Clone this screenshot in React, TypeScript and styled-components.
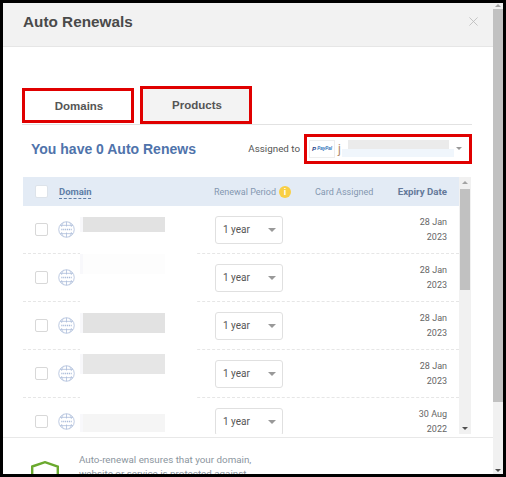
import React from 'react';
import styled, { createGlobalStyle } from 'styled-components';

const GlobalStyle = createGlobalStyle`
  html, body { margin: 0; padding: 0; background: #000; }
  * { box-sizing: border-box; }
`;

type RowData = {
  date: string;
  year: string;
  shade: string;
  top: number;
  height: number;
};

const ROWS: RowData[] = [
  { date: '28 Jan', year: '2023', shade: '#e2e2e2', top: 11, height: 15 },
  { date: '28 Jan', year: '2023', shade: '#fdfdfd', top: 0, height: 20 },
  { date: '28 Jan', year: '2023', shade: '#e2e2e2', top: 11, height: 20 },
  { date: '28 Jan', year: '2023', shade: '#e6e6e6', top: 4, height: 20 },
  { date: '30 Aug', year: '2022', shade: '#f5f5f5', top: 16, height: 18 },
];

const Globe = () => (
  <GlobeSvg viewBox="0 0 18 18" fill="none" stroke="#a9bad8" strokeWidth="0.8">
    <circle cx="9" cy="9" r="8.2" />
    <path d="M2.200 4.600h13.600M2.200 13.400h13.600M9 .8v5M9 12.200v5" />
    <path d="M6 1.500C4.600 3 4 4.400 3.800 6.200M12 1.500c1.400 1.500 2 2.900 2.200 4.700M6 16.500c-1.400-1.500-2-2.900-2.200-4.700M12 16.500c1.400-1.500 2-2.900 2.200-4.700" />
    <path d="M3.500 9h11" strokeDasharray="1.200 .8" strokeWidth="1.600" />
  </GlobeSvg>
);

export default function App() {
  return (
    <>
      <GlobalStyle />
      <Frame>
        <Modal>
          <Header>
            <Title>Auto Renewals</Title>
            <CloseIcon viewBox="0 0 10 10" stroke="#b9b9b9" strokeWidth="0.9">
              <path d="M.5.500l9 9M9.500.500l-9 9" />
            </CloseIcon>
          </Header>
          <Body>
            <Tabs>
              <Tab>Domains</Tab>
              <Tab $inactive>Products</Tab>
            </Tabs>
            <SummaryBar>
              <Heading>You have 0 Auto Renews</Heading>
              <AssignedLabel>Assigned to</AssignedLabel>
              <AccountSelect>
                <PayPalBadge>
                  <PayPalMark>P</PayPalMark>
                  <PayPalText>PayPal</PayPalText>
                </PayPalBadge>
                <AccountInitial>j</AccountInitial>
                <AccountBlur />
                <SmallCaret />
              </AccountSelect>
            </SummaryBar>
            <TableArea>
              <Table>
                <HeadRow>
                  <CheckBox $head />
                  <DomainHead>Domain</DomainHead>
                  <PeriodHead>
                    Renewal Period
                    <InfoDot>i</InfoDot>
                  </PeriodHead>
                  <CardHead>Card Assigned</CardHead>
                  <ExpiryHead>Expiry Date</ExpiryHead>
                </HeadRow>
                {ROWS.map((row, i) => (
                  <Row key={i}>
                    <CheckBox />
                    <Globe />
                    <DomainCell>
                      <Smudge $shade={row.shade} $top={row.top} $height={row.height} />
                      <LineGap />
                    </DomainCell>
                    <YearSelect>
                      1 year
                      <CaretMark />
                    </YearSelect>
                    <DateCell>
                      {row.date}
                      <br />
                      {row.year}
                    </DateCell>
                  </Row>
                ))}
              </Table>
              <InnerScroll>
                <ArrowUp />
                <InnerThumb />
                <ArrowDown />
              </InnerScroll>
            </TableArea>
          </Body>
          <Footer>
            <ShieldIcon viewBox="0 0 28 32" fill="none" stroke="#6aa92e" strokeWidth="2.4">
              <path d="M1.200 5.500L14 1.200l12.800 4.300v12.500c0 6-6 10-12.800 13C7.200 28 1.200 24 1.200 18z" />
            </ShieldIcon>
            <FooterText>
              Auto-renewal ensures that your domain,
              <br />
              website or service is protected against
            </FooterText>
          </Footer>
        </Modal>
        <OuterScroll>
          <ArrowUp />
          <OuterThumb />
          <ArrowDownDark />
        </OuterScroll>
      </Frame>
    </>
  );
}

const Frame = styled.div`
  width: 506px;
  height: 477px;
  border: 3px solid #000;
  background: #fff;
  display: flex;
  overflow: hidden;
`;

const Modal = styled.div`
  width: 490px;
  height: 471px;
  display: flex;
  flex-direction: column;
  overflow: hidden;
  font-family: Roboto, sans-serif;
`;

const Header = styled.div`
  height: 44px;
  flex: none;
  padding: 0 15px 0 20px;
  background: #f2f2f2;
  border-bottom: 1px solid #e6e6e6;
  display: flex;
  align-items: center;
  justify-content: space-between;
`;

const Title = styled.div`
  font: bold 15.300px 'Liberation Sans', Arial, sans-serif;
  color: #4a4a4a;
  margin-top: -6px;
`;

const CloseIcon = styled.svg`
  width: 9px;
  height: 9px;
  margin-top: -6px;
`;

const Body = styled.div`
  height: 390px;
  flex: none;
  padding: 39px 0 0 20px;
  overflow: hidden;
`;

const Tabs = styled.div`
  width: 450px;
  height: 39px;
  margin-left: -1px;
  display: flex;
  align-items: flex-end;
  gap: 6px;
  border-bottom: 1px solid #e2e2e2;
`;

const Tab = styled.div<{ $inactive?: boolean }>`
  width: 112px;
  height: ${(p) => (p.$inactive ? 38 : 35)}px;
  margin-bottom: ${(p) => (p.$inactive ? 0 : 1)}px;
  padding-left: 2px;
  border: 3px solid #e00000;
  background: ${(p) => (p.$inactive ? '#f3f3f3' : '#fff')};
  font: bold 11.500px 'Liberation Sans', Arial, sans-serif;
  color: #555;
  display: flex;
  align-items: center;
  justify-content: center;
`;

const SummaryBar = styled.div`
  width: 449px;
  height: 47px;
  display: flex;
  align-items: center;
`;

const Heading = styled.div`
  margin-left: 8px;
  font: bold 14px 'Liberation Sans', Arial, sans-serif;
  color: #4f73ab;
`;

const AssignedLabel = styled.div`
  margin-left: auto;
  margin-right: 4px;
  font-size: 9.800px;
  color: #555;
`;

const AccountSelect = styled.div`
  width: 168px;
  height: 30px;
  border: 3px solid #e00000;
  background: #fff;
  display: flex;
  align-items: center;
  padding: 0 7px 0 2px;
`;

const PayPalBadge = styled.div`
  width: 26px;
  height: 18px;
  border: 1px solid #eee;
  display: flex;
  align-items: center;
  justify-content: center;
  gap: 1px;
`;

const PayPalMark = styled.span`
  font: italic bold 6px 'Liberation Sans', sans-serif;
  color: #1f3f86;
`;

const PayPalText = styled.span`
  font: italic bold 4.500px 'Liberation Sans', sans-serif;
  color: #2a6fb8;
`;

const AccountInitial = styled.span`
  margin-left: 3px;
  font-size: 12px;
  color: #b0876e;
`;

const AccountBlur = styled.div`
  width: 112px;
  height: 17px;
  margin: 0 auto 0 1px;
  background:
    linear-gradient(#ebebeb, #ebebeb) 6px 0 / 101px 9px no-repeat,
    linear-gradient(#f0f6fc, #f0f6fc) 0 9px / 100% 8px no-repeat;
`;

const TableArea = styled.div`
  margin: 5px 0 0 0;
  width: 449px;
  height: 257px;
  display: flex;
`;

const Table = styled.div`
  width: 436px;
  overflow: hidden;
`;

const HeadRow = styled.div`
  height: 29px;
  background: #e3ebf5;
  display: flex;
  align-items: center;
  padding-left: 12px;
  font-size: 9px;
  color: #8497b0;
`;

const CheckBox = styled.div<{ $head?: boolean }>`
  width: 13px;
  height: 13px;
  flex: none;
  background: #fff;
  border: 1px solid ${(p) => (p.$head ? '#dde3ea' : '#d8d8d8')};
  border-radius: 2px;
`;

const DomainHead = styled.div`
  margin-left: 11px;
  width: 155px;
  font-size: 9.500px;
  font-weight: 700;
  color: #5f7fa8;
  text-decoration: underline dashed;
  text-underline-offset: 3px;
`;

const PeriodHead = styled.div`
  width: 101px;
  display: flex;
  align-items: center;
  gap: 3px;
  white-space: nowrap;
`;

const InfoDot = styled.span`
  width: 12px;
  height: 12px;
  border-radius: 50%;
  background: #f9cf45;
  color: #fff;
  font: bold 9px/12px 'Liberation Sans', sans-serif;
  text-align: center;
`;

const CardHead = styled.div`
  white-space: nowrap;
`;

const ExpiryHead = styled.div`
  margin-left: auto;
  margin-right: 12px;
  font-size: 9.700px;
  font-weight: 700;
  color: #64799a;
`;

const Row = styled.div`
  position: relative;
  height: 48px;
  display: flex;
  align-items: center;
  padding: 0 12px;
  border-bottom: 1px dashed #e6e6e6;
`;

const GlobeSvg = styled.svg`
  width: 17px;
  height: 17px;
  flex: none;
  margin-left: 10px;
`;

const DomainCell = styled.div`
  width: 140px;
  flex: none;
  align-self: stretch;
`;

const Smudge = styled.div<{ $shade: string; $top: number; $height: number }>`
  position: absolute;
  left: 57px;
  top: ${(p) => p.$top}px;
  height: ${(p) => p.$height}px;
  width: 85px;
  background: ${(p) => p.$shade};
  border-left: 3px solid #f8f8fb;
`;

const LineGap = styled.div`
  position: absolute;
  left: 57px;
  bottom: -1px;
  width: 117px;
  height: 1px;
  background: #fff;
`;

const YearSelect = styled.div`
  width: 68px;
  height: 28px;
  flex: none;
  border: 1px solid #e0e0e0;
  border-radius: 3px;
  background: #fff;
  display: flex;
  align-items: center;
  justify-content: space-between;
  padding: 0 6px 0 7px;
  font-size: 10px;
  color: #555;
`;

const CaretMark = styled.span`
  width: 0;
  height: 0;
  border-left: 4px solid transparent;
  border-right: 4px solid transparent;
  border-top: 4px solid #999;
`;

const SmallCaret = styled(CaretMark)`
  border-left-width: 3px;
  border-right-width: 3px;
  border-top-width: 3px;
`;

const DateCell = styled.div`
  margin-left: auto;
  text-align: right;
  font-size: 9px;
  line-height: 15px;
  color: #666;
`;

const InnerScroll = styled.div`
  width: 12px;
  background: #f1f1f1;
  display: flex;
  flex-direction: column;
  align-items: center;
  padding-top: 4px;
`;

const ArrowUp = styled.span`
  width: 0;
  height: 0;
  flex: none;
  border-left: 3px solid transparent;
  border-right: 3px solid transparent;
  border-bottom: 3px solid #a3a3a3;
`;

const InnerThumb = styled.div`
  width: 10px;
  height: 101px;
  margin-top: 5px;
  background: #c1c1c1;
`;

const ArrowDown = styled.span`
  width: 0;
  height: 0;
  margin-top: auto;
  margin-bottom: 4px;
  border-left: 3px solid transparent;
  border-right: 3px solid transparent;
  border-top: 3px solid #505050;
`;

const Footer = styled.div`
  flex: none;
  height: 60px;
  border-top: 1px solid #e8e8e8;
  display: flex;
  align-items: flex-start;
  padding: 15px 0 0 28px;
`;

const ShieldIcon = styled.svg`
  width: 28px;
  height: 32px;
  flex: none;
  margin-top: 8px;
`;

const FooterText = styled.div`
  margin-left: 20px;
  font-size: 9.800px;
  line-height: 14px;
  color: #8c96a0;
`;

const OuterScroll = styled.div`
  width: 10px;
  background: #f1f1f1;
  display: flex;
  flex-direction: column;
  align-items: center;
  padding-top: 1px;
`;

const OuterThumb = styled.div`
  width: 10px;
  height: 393px;
  margin-top: 2px;
  background: #c1c1c1;
`;

const ArrowDownDark = styled(ArrowDown)`
  margin-bottom: 2px;
`;
